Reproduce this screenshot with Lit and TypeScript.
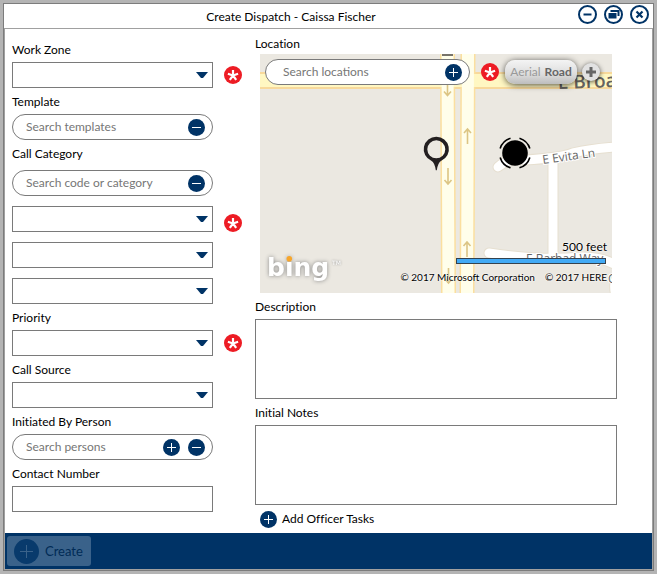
import { LitElement, html, css, svg } from "lit";
import { customElement, property } from "lit/decorators.js";

const glyphs = {
  plus: svg`<path d="M8.5 4v9M4 8.5h9" />`,
  minus: svg`<path d="M4 8.5h9" />`,
};

@customElement("round-icon")
class RoundIcon extends LitElement {
  @property() kind: "plus" | "minus" = "plus";
  static styles = css`
    :host { display: block; width: 17px; height: 17px; }
    svg { display: block; width: 100%; height: 100%; }
    circle { fill: #003366; }
    path { stroke: #fff; stroke-width: 1; fill: none; }
  `;
  render() {
    return html`<svg viewBox="0 0 17 17" aria-hidden="true">
      <circle cx="8.5" cy="8.5" r="8.5" />${glyphs[this.kind]}
    </svg>`;
  }
}

@customElement("required-mark")
class RequiredMark extends LitElement {
  static styles = css`
    :host { display: block; width: 18px; height: 18px; }
    svg { display: block; }
    circle { fill: #ed1c24; }
    path { stroke: #fff; stroke-width: 2.2; fill: none; }
  `;
  render() {
    return html`<svg width="18" height="18" viewBox="0 0 18 18" role="img" aria-label="Required">
      <circle cx="9" cy="9" r="9" />
      <path d="M9 9.5V4M9 9.5L3.9 7.8M9 9.5L14.1 7.8M9 9.5L5.8 13.9M9 9.5L12.2 13.9" />
    </svg>`;
  }
}

@customElement("dispatch-map")
class DispatchMap extends LitElement {
  static styles = css`
    :host { display: block; }
    .map { position: relative; height: 239px; overflow: hidden; background: #ebe8e1; }
    .tiles { position: absolute; right: 0; top: 0; width: 100%; height: 100%; display: block; }
    .main-edge { fill: #f8d99b; }
    .main { fill: #fff7c2; }
    .avenue-edge { fill: none; stroke: #fbdf9f; stroke-width: 15; }
    .avenue { fill: none; stroke: #fffeea; stroke-width: 12; }
    .arrow { fill: none; stroke: #dcc584; stroke-width: 1.6; }
    .street-edge { fill: none; stroke: #e6dfd0; stroke-width: 11; stroke-linecap: round; stroke-linejoin: round; }
    .street { fill: none; stroke: #fff; stroke-width: 9; stroke-linecap: round; stroke-linejoin: round; }
    .road-name { font: 12px "Open Sans", sans-serif; fill: #666; stroke: #fff; stroke-width: 2; paint-order: stroke; }
    .main-name { font: 600 19px "Open Sans", sans-serif; fill: #66635f; }
    .logo { font: bold 25px "DejaVu Sans", sans-serif; fill: #fff; filter: drop-shadow(0 0 2px #888); }
    .tm { font: 6px "DejaVu Sans", sans-serif; fill: #fff; filter: drop-shadow(0 0 1px #888); }
    .bar { position: absolute; top: 5px; left: 5px; right: 0; display: flex; align-items: center; }
    .search {
      flex: 0 1 205px; box-sizing: border-box; height: 26px; display: flex; align-items: center;
      border: 1px solid #7a7a7a; border-radius: 13px; background: #fff; padding: 0 7px 0 17px;
    }
    input {
      flex: 1; min-width: 0; border: 0; padding: 0; outline: 0; background: none;
      font: 12px/16px var(--ui-font); color: #000;
    }
    input::placeholder { color: #767676; opacity: 1; }
    button { border: 0; padding: 0; background: none; font: inherit; }
    required-mark { margin: 0 6px 0 11px; flex: none; }
    .mode {
      flex: none; display: flex; align-items: center; justify-content: center; gap: 4px;
      width: 72px; height: 24px; border-radius: 10px;
      background: linear-gradient(#f4f4f4, #dcdcdc 60%, #bdbdbd);
      box-shadow: 0 1px 6px rgba(0, 0, 0, 0.7); font: 12px/16px var(--ui-font); color: #999;
    }
    .mode .on { font-weight: 700; color: #666; }
    .zoom {
      flex: none; width: 18px; height: 18px; margin-left: 5px; border-radius: 9px; background: #e2e2e2;
      box-shadow: 0 1px 5px rgba(0, 0, 0, 0.7);
    }
    .zoom svg { display: block; }
    .legend {
      position: absolute; right: 5px; bottom: 9px; display: flex; flex-direction: column; align-items: flex-end;
      font: 12px/14px var(--ui-font); color: #000; text-shadow: 0 0 2px #fff, 0 0 2px #fff;
    }
    .scale { box-sizing: border-box; width: 150px; height: 6px; border: 1px solid #34424e; background: #42aaf5; margin: 4px 1px 6px 0; }
    .credits { display: flex; gap: 10px; font-size: 10px; }
  `;
  render() {
    return html`<div class="map">
      <svg class="tiles" viewBox="260 54 352 239" preserveAspectRatio="xMidYMid slice" role="img" aria-label="Street map">
        <rect class="main-edge" x="260" y="72" width="352" height="17" />
        <path class="avenue-edge" d="M447.5 54L448.5 293M468 54L467 293" />
        <rect class="main" x="260" y="74" width="352" height="13" />
        <path class="avenue" d="M447.5 54L448.5 293M468 54L467 293" />
        <rect x="442" y="54" width="11" height="2" fill="#77736a" />
        <path class="arrow" d="M447.5 85v10M444 91.5l3.5 4l3.5-4M448 168v16M444.5 180l3.5 4l3.5-4M448.5 268v15M445 279l3.5 4l3.5-4M467.5 144v-15M464 133l3.5-4l3.5 4M467 257v-15M463.5 246l3.5-4l3.5 4" />
        <path class="street-edge" d="M498 167Q508 158 525 160Q560 158 573 153Q590 149 616 147M553 158V258M489 253Q545 261 580 257Q600 256 616 265M620 272Q612 280 616 296" />
        <path class="street" d="M498 167Q508 158 525 160Q560 158 573 153Q590 149 616 147M553 158V258M489 253Q545 261 580 257Q600 256 616 265M620 272Q612 280 616 296" />
        <text class="road-name" transform="rotate(-8 543 164)" x="543" y="164">E Evita Ln</text>
        <text class="road-name" x="526" y="263">E Barbad Way</text>
        <text class="road-name" x="608" y="283">C</text>
        <text class="main-name" transform="rotate(-2 558 89)" x="558" y="89">E Broa</text>
        <text class="logo" x="267" y="276">bing</text>
        <circle cx="289.3" cy="258.8" r="2.8" fill="#f7a62b" />
        <text class="tm" x="332" y="265">TM</text>
        <path fill-rule="evenodd" d="M436.3 136.8a12.5 12.5 0 0 0-5 24q3.5 2 4.5 9.5h1q1-7.5 4.5-9.5a12.5 12.5 0 0 0-5-24zM436.3 140.3a9 9 0 0 1 0 18a9 9 0 0 1 0-18z" fill="#231f20" />
        <circle cx="515" cy="153" r="12.8" fill="#000" />
        <circle cx="515" cy="153" r="15.5" fill="none" stroke="#000" stroke-width="1.6" pathLength="360" stroke-dasharray="56 34" stroke-dashoffset="-17" />
      </svg>
      <div class="bar">
        <div class="search">
          <input type="text" placeholder="Search locations" aria-label="Search locations" />
          <button aria-label="Add location"><round-icon kind="plus"></round-icon></button>
        </div>
        <required-mark></required-mark>
        <button class="mode"><span>Aerial</span><span class="on">Road</span></button>
        <button class="zoom" aria-label="Zoom in">
          <svg width="18" height="18" viewBox="0 0 18 18"><path d="M9 4v10M4 9h10" stroke="#666" stroke-width="3" /></svg>
        </button>
      </div>
      <div class="legend">
        <span>500 feet</span>
        <div class="scale"></div>
        <div class="credits"><span>© 2017 Microsoft Corporation</span><span>© 2017 HERE</span></div>
      </div>
    </div>`;
  }
}

type Control = { kind: "select" | "search" | "text"; id: string; hint?: string; required?: boolean; add?: boolean };
type Field = { label: string; controls: Control[] };

const fields: Field[] = [
  { label: "Work Zone", controls: [{ kind: "select", id: "zone", required: true }] },
  { label: "Template", controls: [{ kind: "search", id: "template", hint: "Search templates" }] },
  {
    label: "Call Category",
    controls: [
      { kind: "search", id: "category", hint: "Search code or category" },
      { kind: "select", id: "category-1", required: true },
      { kind: "select", id: "category-2" },
      { kind: "select", id: "category-3" },
    ],
  },
  { label: "Priority", controls: [{ kind: "select", id: "priority", required: true }] },
  { label: "Call Source", controls: [{ kind: "select", id: "source" }] },
  { label: "Initiated By Person", controls: [{ kind: "search", id: "person", hint: "Search persons", add: true }] },
  { label: "Contact Number", controls: [{ kind: "text", id: "contact" }] },
];

@customElement("app-root")
class AppRoot extends LitElement {
  static styles = css`
    :host {
      --ui-font: Lato, "Open Sans", sans-serif;
      display: flex; box-sizing: border-box; min-height: 100vh; padding: 3px;
      background: #b4b4b4; font: 12px/16px var(--ui-font); font-variant-ligatures: none; color: #000;
    }
    .window { flex: 1; min-width: 0; display: flex; flex-direction: column; border: 1px solid #7c7c7c; background: #fff; }
    .title { position: relative; display: flex; align-items: center; justify-content: center; height: 24px; }
    h1 { margin: 0; padding: 2px 75px 0 0; font: inherit; font-variant-ligatures: none; }
    .controls { position: absolute; right: 4px; top: 1px; display: flex; gap: 7px; }
    button { border: 0; padding: 0; background: none; font: inherit; color: inherit; }
    .controls svg { display: block; }
    .body { flex: 1; display: flex; flex-direction: column; border: 1px solid #a0a0a0; }
    .form { flex: 1; display: grid; grid-template-columns: minmax(0, 243fr) minmax(0, 362fr); padding: 7px 35px 0 7px; }
    .label { display: flex; align-items: center; box-sizing: border-box; height: 26px; padding-top: 2px; }
    .row { display: grid; grid-template-columns: minmax(0, 1fr) 42px; align-items: center; height: 26px; }
    .group .row { margin-bottom: 10px; }
    .group .row:last-child { margin-bottom: 0; }
    .group .label { margin-bottom: 4px; }
    .row required-mark { margin-left: 11px; }
    .group required-mark { align-self: end; }
    .box { position: relative; height: 26px; }
    select, .text, textarea {
      display: block; box-sizing: border-box; width: 100%; height: 26px; margin: 0; padding: 0 6px;
      border: 1px solid #7a7a7a; border-radius: 0; background: #fff; font: inherit; outline: 0;
    }
    select { appearance: none; }
    .caret { position: absolute; right: 5px; top: 10px; pointer-events: none; display: block; }
    .search {
      box-sizing: border-box; height: 26px; display: flex; align-items: center; gap: 8px;
      border: 1px solid #7a7a7a; border-radius: 13px; padding: 0 7px 0 13px;
    }
    .search input { flex: 1; min-width: 0; border: 0; padding: 0; background: none; font: inherit; outline: 0; }
    .search input::placeholder { color: #767676; opacity: 1; }
    .right { display: flex; flex-direction: column; }
    .location { height: 18px; }
    dispatch-map { margin: 0 5px; }
    textarea { height: 80px; resize: none; padding: 4px 6px; }
    .tasks { display: flex; align-items: center; gap: 5px; height: 28px; margin-left: 5px; align-self: flex-start; }
    .footer { display: flex; align-items: center; height: 36px; padding: 0 2px; background: #003366; }
    .create {
      display: flex; align-items: center; gap: 6px; height: 30px; padding: 0 8px 0 7px;
      border-radius: 3px; background: #3a628a; color: #002b56; font-size: 13px;
    }
    .create svg { display: block; }
  `;

  private control(c: Control, label: string) {
    if (c.kind === "select")
      return html`<div class="box">
        <select id=${c.id} aria-label=${label}></select>
        <svg class="caret" width="12" height="7" viewBox="0 0 12 7" aria-hidden="true"><path d="M0 0h12L7 6H5z" fill="#003366" /></svg>
      </div>`;
    if (c.kind === "text") return html`<input class="text" type="text" id=${c.id} />`;
    return html`<div class="search">
      <input type="text" id=${c.id} placeholder=${c.hint ?? ""} />
      ${c.add ? html`<button aria-label="Add"><round-icon kind="plus"></round-icon></button>` : null}
      <button aria-label="Clear"><round-icon kind="minus"></round-icon></button>
    </div>`;
  }

  private field(f: Field) {
    return html`<div class=${f.controls.length > 1 ? "group" : "single"}>
      <label class="label" for=${f.controls[0].id}>${f.label}</label>
      ${f.controls.map(
        (c) => html`<div class="row">${this.control(c, f.label)}${c.required ? html`<required-mark></required-mark>` : null}</div>`
      )}
    </div>`;
  }

  private windowButton(name: string, glyph: unknown) {
    return html`<button aria-label=${name}>
      <svg width="19" height="19" viewBox="0 0 19 19">
        <circle cx="9.5" cy="9.5" r="8.5" fill="#fff" stroke="#003366" stroke-width="2" />${glyph}
      </svg>
    </button>`;
  }

  render() {
    return html`<div class="window">
      <header class="title">
        <h1>Create Dispatch - Caissa Fischer</h1>
        <div class="controls">
          ${this.windowButton("Minimize", svg`<path d="M5.5 9.5h8" stroke="#003366" stroke-width="2" />`)}
          ${this.windowButton(
            "Restore",
            svg`<path d="M6.5 6h8v5" stroke="#003366" stroke-width="2" fill="none" /><path d="M4.5 8h8v5.5h-8z" fill="#003366" />`
          )}
          ${this.windowButton("Close", svg`<path d="M6.5 6.5l6 6M12.5 6.5l-6 6" stroke="#003366" stroke-width="2.2" />`)}
        </div>
      </header>
      <main class="body">
        <div class="form">
          <section>${fields.map((f) => this.field(f))}</section>
          <section class="right">
            <div class="location">Location</div>
            <dispatch-map></dispatch-map>
            <label class="label" for="description">Description</label>
            <textarea id="description"></textarea>
            <label class="label" for="notes">Initial Notes</label>
            <textarea id="notes"></textarea>
            <button class="tasks"><round-icon kind="plus"></round-icon>Add Officer Tasks</button>
          </section>
        </div>
        <footer class="footer">
          <button class="create">
            <svg width="25" height="25" viewBox="0 0 25 25" aria-hidden="true">
              <circle cx="12.5" cy="12.5" r="12.5" fill="#083a6c" /><path d="M12.5 6v13M6 12.5h13" stroke="#3a628a" />
            </svg>
            Create
          </button>
        </footer>
      </main>
    </div>`;
  }
}
